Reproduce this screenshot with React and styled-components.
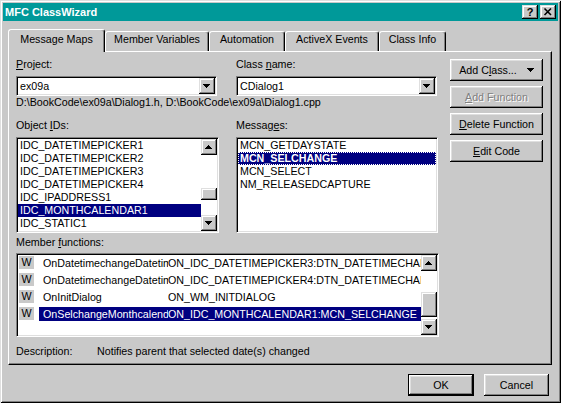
import React from 'react';
import styled, { createGlobalStyle } from 'styled-components';

const C = {
  face: '#c9c9c9',
  light: '#dfdfdf',
  shadow: '#808080',
  dark: '#000000',
  white: '#ffffff',
  navy: '#000080',
  teal: '#009999',
};

const Global = createGlobalStyle`
  html, body { margin: 0; padding: 0; background: ${C.face}; }
  body {
    font-family: "Liberation Sans", Arial, sans-serif;
    font-size: 10.7px;
    color: #000;
  }
  * { box-sizing: border-box; }
`;

const Window = styled.div`
  width: 561px;
  height: 403px;
  padding: 3px;
  display: flex;
  flex-direction: column;
  background: ${C.face};
  box-shadow: inset 1px 1px ${C.light}, inset -1px -1px ${C.dark},
    inset 2px 2px ${C.white}, inset -2px -2px ${C.shadow};
`;

const TitleBar = styled.div`
  height: 18px;
  flex: none;
  display: flex;
  align-items: center;
  padding: 0 2px;
  background: ${C.teal};
`;

const TitleText = styled.div`
  color: #fff;
  font-weight: bold;
  font-size: 11px;
  line-height: 14px;
  white-space: nowrap;
`;

const CaptionButtons = styled.div`
  margin-left: auto;
  display: flex;
  gap: 2px;
`;

const CaptionButton = styled.div`
  width: 16px;
  height: 14px;
  background: ${C.face};
  display: flex;
  align-items: center;
  justify-content: center;
  font-weight: bold;
  font-size: 11px;
  line-height: 12px;
  box-shadow: inset -1px -1px ${C.dark}, inset 1px 1px ${C.light},
    inset -2px -2px ${C.shadow}, inset 2px 2px ${C.white};
`;

const Body = styled.div`
  flex: 1;
  display: flex;
  flex-direction: column;
  padding: 8px 6px 0 5px;
`;

const TabRow = styled.div`
  display: flex;
  height: 22px;
  position: relative;
  z-index: 2;
`;

const Tab = styled.div`
  width: ${p => p.$w}px;
  height: ${p => (p.$active ? 23 : 20)}px;
  margin-top: ${p => (p.$active ? 0 : 2)}px;
  padding-top: ${p => (p.$active ? 3 : 1)}px;
  background: ${C.face};
  border: 1px solid;
  border-bottom: none;
  border-color: ${C.white} ${C.dark} transparent ${C.white};
  border-radius: 3px 3px 0 0;
  box-shadow: inset -1px 0 ${C.shadow};
  text-align: center;
  line-height: 13px;
  white-space: nowrap;
`;

const Panel = styled.div`
  height: 314px;
  flex: none;
  border: 1px solid;
  border-color: ${C.white} ${C.dark} ${C.dark} ${C.white};
  box-shadow: inset -1px -1px ${C.shadow};
  padding: 6px 0 0 7px;
  display: flex;
  flex-direction: column;
`;

const TopArea = styled.div`
  display: flex;
  align-items: flex-start;
`;

const LeftArea = styled.div`
  width: 421px;
  display: flex;
  flex-direction: column;
`;

const FieldRow = styled.div`
  display: flex;
  gap: ${p => p.$gap}px;
  margin-top: ${p => p.$top || 0}px;
`;

const Field = styled.div`
  width: ${p => p.$w}px;
  display: flex;
  flex-direction: column;
`;

const Label = styled.div`
  height: 13px;
  line-height: 13px;
  white-space: nowrap;
  margin-bottom: ${p => (p.$gap === undefined ? 5 : p.$gap)}px;
`;

const Mn = styled.span`
  text-decoration: underline;
  text-underline-offset: 1px;
`;

const Combo = styled.div`
  height: 20px;
  display: flex;
  align-items: center;
  background: #fff;
  border: 1px solid;
  border-color: ${C.shadow} ${C.white} ${C.white} ${C.shadow};
  box-shadow: inset 1px 1px ${C.dark}, inset -1px -1px ${C.light};
  padding: 1px;
`;

const ComboText = styled.div`
  flex: 1;
  padding-left: 2px;
  line-height: 13px;
  white-space: nowrap;
  overflow: hidden;
`;

const RaisedBox = styled.div`
  width: 16px;
  height: 16px;
  flex: none;
  background: ${C.face};
  display: flex;
  align-items: center;
  justify-content: center;
  box-shadow: inset -1px -1px ${C.dark}, inset 1px 1px ${C.light},
    inset -2px -2px ${C.shadow}, inset 2px 2px ${C.white};
`;

const PathText = styled.div`
  height: 13px;
  line-height: 13px;
  white-space: nowrap;
`;

const ListBox = styled.div`
  width: ${p => p.$w}px;
  height: ${p => p.$h}px;
  display: flex;
  background: #fff;
  border: 1px solid;
  border-color: ${C.shadow} ${C.white} ${C.white} ${C.shadow};
  box-shadow: inset 1px 1px ${C.dark}, inset -1px -1px ${C.light};
  padding: 1px;
`;

const Items = styled.div`
  flex: 1;
  min-width: 0;
  overflow: hidden;
  display: flex;
  flex-direction: column;
`;

const Item = styled.div`
  height: 13px;
  flex: none;
  line-height: 13px;
  padding-left: 2px;
  white-space: nowrap;
  background: ${p => (p.$sel ? C.navy : 'transparent')};
  color: ${p => (p.$sel ? '#fff' : '#000')};
  font-weight: ${p => (p.$bold ? 'bold' : 'normal')};
  outline: ${p => (p.$focus ? '1px dotted #ffffff' : 'none')};
  outline-offset: -1px;
`;

const ScrollBar = styled.div`
  width: 16px;
  flex: none;
  display: flex;
  flex-direction: column;
  background: #ffffff;
`;

const Track = styled.div`
  flex: 1;
  display: flex;
  flex-direction: column;
`;

const Thumb = styled.div`
  margin-top: ${p => p.$top}px;
  height: ${p => p.$h}px;
  width: 16px;
  background: ${C.face};
  box-shadow: inset -1px -1px ${C.dark}, inset 1px 1px ${C.light},
    inset -2px -2px ${C.shadow}, inset 2px 2px ${C.white};
`;

const RightButtons = styled.div`
  margin-left: 13px;
  margin-top: 1px;
  display: flex;
  flex-direction: column;
  gap: 5px;
`;

const Button = styled.div`
  width: ${p => p.$w}px;
  height: 22px;
  display: flex;
  align-items: center;
  justify-content: center;
  gap: ${p => p.$gap || 0}px;
  background: ${C.face};
  line-height: 13px;
  white-space: nowrap;
  color: ${p => (p.$disabled ? C.shadow : '#000')};
  text-shadow: ${p => (p.$disabled ? `1px 1px 0 ${C.white}` : 'none')};
  border: ${p => (p.$default ? `1px solid ${C.dark}` : 'none')};
  box-shadow: inset -1px -1px ${C.dark}, inset 1px 1px ${C.white},
    inset -2px -2px ${C.shadow}, inset 2px 2px ${C.light};
`;

const MemberSection = styled.div`
  margin-top: 3px;
  display: flex;
  flex-direction: column;
`;

const FuncRow = styled.div`
  height: 17px;
  flex: none;
  display: flex;
  align-items: flex-start;
  padding-top: 1px;
`;

const WIcon = styled.div`
  width: 15px;
  height: 13px;
  margin-left: 1px;
  flex: none;
  background: ${C.face};
  display: flex;
  align-items: center;
  justify-content: center;
  line-height: 13px;
`;

const FuncCell = styled.div`
  flex: 1;
  min-width: 0;
  height: 14px;
  margin-left: 5px;
  display: flex;
  line-height: 14px;
  white-space: nowrap;
  overflow: hidden;
  background: ${p => (p.$sel ? C.navy : 'transparent')};
  color: ${p => (p.$sel ? '#fff' : '#000')};
`;

const FuncName = styled.div`
  width: 129px;
  flex: none;
  padding-left: 4px;
  overflow: hidden;
`;

const FuncMap = styled.div`
  flex: 1;
  overflow: hidden;
`;

const DescRow = styled.div`
  margin-top: 8px;
  display: flex;
  line-height: 13px;
  white-space: nowrap;
`;

const DescLabel = styled.div`
  width: 81px;
`;

const BottomRow = styled.div`
  margin-top: 9px;
  display: flex;
  justify-content: flex-end;
  gap: 10px;
  padding-right: 3px;
`;

const Arrow = ({ dir }) => (
  <svg width="16" height="16" viewBox="0 0 16 16" shapeRendering="crispEdges">
    <path
      fill="#000"
      d={
        dir === 'up'
          ? 'M4 10H11V9H10V8H9V7H8V6H7V7H6V8H5V9H4Z'
          : 'M4 6H11V7H10V8H9V9H8V10H7V9H6V8H5V7H4Z'
      }
    />
  </svg>
);

const SmallDown = () => (
  <svg width="7" height="4" viewBox="0 0 7 4" shapeRendering="crispEdges">
    <path fill="#000" d="M0 0H7V1H6V2H5V3H4V4H3V3H2V2H1V1H0Z" />
  </svg>
);

const CloseGlyph = () => (
  <svg width="16" height="14" viewBox="0 0 16 14">
    <path d="M4.5 3.5L11 10M11 3.5L4.5 10" stroke="#000" strokeWidth="1.6" />
  </svg>
);

const Scroll = ({ thumbTop, thumbH }) => (
  <ScrollBar>
    <RaisedBox>
      <Arrow dir="up" />
    </RaisedBox>
    <Track>
      <Thumb $top={thumbTop} $h={thumbH} />
    </Track>
    <RaisedBox>
      <Arrow dir="down" />
    </RaisedBox>
  </ScrollBar>
);

const tabs = [
  { label: 'Message Maps', w: 97, active: true },
  { label: 'Member Variables', w: 104 },
  { label: 'Automation', w: 76 },
  { label: 'ActiveX Events', w: 94 },
  { label: 'Class Info', w: 67 },
];

const objectIds = [
  'IDC_DATETIMEPICKER1',
  'IDC_DATETIMEPICKER2',
  'IDC_DATETIMEPICKER3',
  'IDC_DATETIMEPICKER4',
  'IDC_IPADDRESS1',
  'IDC_MONTHCALENDAR1',
  'IDC_STATIC1',
];

const messages = [
  { t: 'MCN_GETDAYSTATE' },
  { t: 'MCN_SELCHANGE', sel: true },
  { t: 'MCN_SELECT' },
  { t: 'NM_RELEASEDCAPTURE' },
];

const funcs = [
  { name: 'OnDatetimechangeDatetimepicker3', map: 'ON_IDC_DATETIMEPICKER3:DTN_DATETIMECHANGE' },
  { name: 'OnDatetimechangeDatetimepicker4', map: 'ON_IDC_DATETIMEPICKER4:DTN_DATETIMECHANGE' },
  { name: 'OnInitDialog', map: 'ON_WM_INITDIALOG' },
  { name: 'OnSelchangeMonthcalendar1', map: 'ON_IDC_MONTHCALENDAR1:MCN_SELCHANGE', sel: true },
];

export default function App() {
  return (
    <>
      <Global />
      <Window>
        <TitleBar>
          <TitleText>MFC ClassWizard</TitleText>
          <CaptionButtons>
            <CaptionButton>?</CaptionButton>
            <CaptionButton>
              <CloseGlyph />
            </CaptionButton>
          </CaptionButtons>
        </TitleBar>
        <Body>
          <TabRow>
            {tabs.map(t => (
              <Tab key={t.label} $w={t.w} $active={t.active}>
                {t.label}
              </Tab>
            ))}
          </TabRow>
          <Panel>
            <TopArea>
              <LeftArea>
                <FieldRow $gap={19}>
                  <Field $w={201}>
                    <Label>
                      <Mn>P</Mn>roject:
                    </Label>
                    <Combo>
                      <ComboText>ex09a</ComboText>
                      <RaisedBox>
                        <Arrow dir="down" />
                      </RaisedBox>
                    </Combo>
                  </Field>
                  <Field $w={201}>
                    <Label>
                      Class <Mn>n</Mn>ame:
                    </Label>
                    <Combo>
                      <ComboText>CDialog1</ComboText>
                      <RaisedBox>
                        <Arrow dir="down" />
                      </RaisedBox>
                    </Combo>
                  </Field>
                </FieldRow>
                <PathText>D:\BookCode\ex09a\Dialog1.h, D:\BookCode\ex09a\Dialog1.cpp</PathText>
                <FieldRow $gap={17} $top={10}>
                  <Field $w={203}>
                    <Label>
                      Object <Mn>I</Mn>Ds:
                    </Label>
                    <ListBox $w={203} $h={96}>
                      <Items>
                        {objectIds.map(id => (
                          <Item key={id} $sel={id === 'IDC_MONTHCALENDAR1'}>
                            {id}
                          </Item>
                        ))}
                      </Items>
                      <Scroll thumbTop={33} thumbH={12} />
                    </ListBox>
                  </Field>
                  <Field $w={202}>
                    <Label>
                      Messag<Mn>e</Mn>s:
                    </Label>
                    <ListBox $w={202} $h={96}>
                      <Items>
                        {messages.map(m => (
                          <Item key={m.t} $sel={m.sel} $bold={m.sel} $focus={m.sel}>
                            {m.t}
                          </Item>
                        ))}
                      </Items>
                    </ListBox>
                  </Field>
                </FieldRow>
              </LeftArea>
              <RightButtons>
                <Button $w={93} $gap={10}>
                  <span>
                    Add C<Mn>l</Mn>ass...
                  </span>
                  <SmallDown />
                </Button>
                <Button $w={93} $disabled>
                  <span>
                    <Mn>A</Mn>dd Function
                  </span>
                </Button>
                <Button $w={93}>
                  <span>
                    <Mn>D</Mn>elete Function
                  </span>
                </Button>
                <Button $w={93}>
                  <span>
                    <Mn>E</Mn>dit Code
                  </span>
                </Button>
              </RightButtons>
            </TopArea>
            <MemberSection>
              <Label $gap={4}>
                Member <Mn>f</Mn>unctions:
              </Label>
              <ListBox $w={423} $h={84}>
                <Items>
                  {funcs.map(f => (
                    <FuncRow key={f.name}>
                      <WIcon>W</WIcon>
                      <FuncCell $sel={f.sel}>
                        <FuncName>{f.name}</FuncName>
                        <FuncMap>{f.map}</FuncMap>
                      </FuncCell>
                    </FuncRow>
                  ))}
                </Items>
                <Scroll thumbTop={21} thumbH={25} />
              </ListBox>
            </MemberSection>
            <DescRow>
              <DescLabel>Description:</DescLabel>
              <div>Notifies parent that selected date(s) changed</div>
            </DescRow>
          </Panel>
          <BottomRow>
            <Button $w={66} $default>
              OK
            </Button>
            <Button $w={65}>Cancel</Button>
          </BottomRow>
        </Body>
      </Window>
    </>
  );
}
